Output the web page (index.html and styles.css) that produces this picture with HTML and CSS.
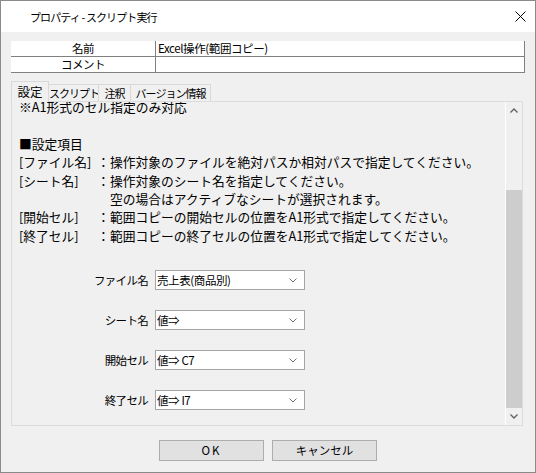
FILE: index.html
```html
<!DOCTYPE html>
<html lang="ja">
<head>
<meta charset="utf-8">
<title>プロパティ - スクリプト実行</title>
<link rel="stylesheet" href="styles.css">
</head>
<body>
<div class="window">
  <div class="titlebar">
    <span class="title">プロパティ - スクリプト実行</span>
    <span class="close">
      <svg width="11" height="11" viewBox="0 0 11 11"><path d="M0.5 0.5 L10.5 10.5 M10.5 0.5 L0.5 10.5" stroke="#000" stroke-width="1" fill="none"/></svg>
    </span>
  </div>
  <div class="body">
    <div class="props">
      <div class="prow"><div class="pkey">名前</div><div class="pval">Excel操作(範囲コピー)</div></div>
      <div class="prow"><div class="pkey">コメント</div><div class="pval"></div></div>
    </div>
    <div class="tabs">
      <div class="tab active w1">設定</div>
      <div class="tab w2">スクリプト</div>
      <div class="tab w3">注釈</div>
      <div class="tab w4">バージョン情報</div>
    </div>
    <div class="panel">
      <div class="viewport">
        <div class="content">
          <div class="desc">
            <div class="line first">※A1形式のセル指定のみ対応</div>
            <div class="line"></div>
            <div class="line">■設定項目</div>
            <div class="line"><span class="lbl">[ファイル名]</span><span class="colon">：</span><span>操作対象のファイルを絶対パスか相対パスで指定してください。</span></div>
            <div class="line"><span class="lbl">[シート名]</span><span class="colon">：</span><span>操作対象のシート名を指定してください。</span></div>
            <div class="line indent">空の場合はアクティブなシートが選択されます。</div>
            <div class="line"><span class="lbl">[開始セル]</span><span class="colon">：</span><span>範囲コピーの開始セルの位置をA1形式で指定してください。</span></div>
            <div class="line"><span class="lbl">[終了セル]</span><span class="colon">：</span><span>範囲コピーの終了セルの位置をA1形式で指定してください。</span></div>
          </div>
          <div class="form">
            <label class="flabel">ファイル名</label>
            <div class="combo"><span class="cval">売上表(商品別)</span><svg class="chev" width="8" height="5" viewBox="0 0 8 5"><path d="M0.5 0.5 L4 4 L7.5 0.5" stroke="#6d6d6d" fill="none"/></svg></div>
            <label class="flabel">シート名</label>
            <div class="combo"><span class="cval">値⇒</span><svg class="chev" width="8" height="5" viewBox="0 0 8 5"><path d="M0.5 0.5 L4 4 L7.5 0.5" stroke="#6d6d6d" fill="none"/></svg></div>
            <label class="flabel">開始セル</label>
            <div class="combo"><span class="cval">値⇒ C7</span><svg class="chev" width="8" height="5" viewBox="0 0 8 5"><path d="M0.5 0.5 L4 4 L7.5 0.5" stroke="#6d6d6d" fill="none"/></svg></div>
            <label class="flabel">終了セル</label>
            <div class="combo"><span class="cval">値⇒ I7</span><svg class="chev" width="8" height="5" viewBox="0 0 8 5"><path d="M0.5 0.5 L4 4 L7.5 0.5" stroke="#6d6d6d" fill="none"/></svg></div>
          </div>
        </div>
      </div>
      <div class="scrollbar">
        <div class="sb-btn up"><svg width="8" height="5" viewBox="0 0 8 5"><path d="M0.5 4.5 L4 1 L7.5 4.5" stroke="#606060" stroke-width="1.3" fill="none"/></svg></div>
        <div class="sb-gap"></div>
        <div class="sb-thumb"></div>
        <div class="sb-btn down"><svg width="8" height="5" viewBox="0 0 8 5"><path d="M0.5 0.5 L4 4 L7.5 0.5" stroke="#606060" stroke-width="1.3" fill="none"/></svg></div>
      </div>
    </div>
    <div class="buttons">
      <button class="btn ok">OK</button>
      <button class="btn">キャンセル</button>
    </div>
  </div>
</div>
</body>
</html>
```
FILE: styles.css
```css
* { box-sizing: border-box; }
html, body { margin: 0; padding: 0; background: #f0f0f0; }
body {
  font-family: "Noto Sans CJK JP", "Noto Sans", sans-serif;
  font-size: 12px;
  color: #000;
}
.window {
  width: 536px;
  height: 473px;
  border: 1px solid #8a8a8a;
  background: #f0f0f0;
  display: flex;
  flex-direction: column;
}
.titlebar {
  height: 31px;
  background: #fff;
  display: flex;
  align-items: center;
  justify-content: space-between;
  padding: 0 9px 0 29px;
}
.title {
  font-size: 11px;
  letter-spacing: -0.9px;
  line-height: 14px;
}
.close { display: flex; align-items: center; height: 11px; }
.body {
  flex: 1;
  padding: 9px 10px 0 10px;
  display: flex;
  flex-direction: column;
}
.props { background: #fff; border-right: 1px solid #808080; }
.prow { display: flex; border-bottom: 1px solid #808080; height: 16px; }
.pkey {
  width: 145px;
  border-right: 1px solid #808080;
  text-align: center;
  line-height: 15px;
  font-size: 11.5px;
  letter-spacing: -0.5px;
}
.pval {
  flex: 1;
  padding-left: 2px;
  line-height: 15px;
  font-size: 11.5px;
  letter-spacing: -0.4px;
}
.tabs {
  margin-top: 8px;
  height: 20px;
  display: flex;
  align-items: flex-end;
  position: relative;
  z-index: 1;
}
.tab {
  height: 17px;
  border: 1px solid #d9d9d9;
  border-bottom: none;
  margin-right: -1px;
  background: #f0f0f0;
  text-align: center;
  line-height: 16px;
  font-size: 11px;
  letter-spacing: -1px;
  white-space: nowrap;
}
.tab.active {
  height: 21px;
  margin-bottom: -1px;
  line-height: 20px;
  font-size: 12.5px;
  letter-spacing: 0;
  position: relative;
  z-index: 2;
}
.w1 { width: 38px; }
.w2 { width: 51px; }
.w3 { width: 33px; }
.w4 { width: 81px; }
.panel {
  width: 512px;
  height: 325px;
  border: 1px solid #dcdcdc;
  display: flex;
  background: #f0f0f0;
}
.viewport { flex: 1; overflow: hidden; }
.content { padding-left: 7px; }
.desc { font-size: 12.75px; }
.line { height: 18.4px; line-height: 18.4px; display: flex; white-space: nowrap; }
.line.first { height: 14.4px; line-height: 10.4px; overflow: hidden; }
.lbl { width: 78px; }
.colon { width: 13px; }
.indent { padding-left: 91px; }
.form {
  margin-top: 24.5px;
  display: grid;
  grid-template-columns: 129px 150px;
  column-gap: 7px;
  row-gap: 20px;
  align-items: center;
}
.flabel {
  text-align: right;
  font-size: 11.5px;
  letter-spacing: -0.7px;
  line-height: 20px;
}
.combo {
  height: 20px;
  background: #fff;
  border: 1px solid #a5a5a5;
  display: flex;
  align-items: center;
  justify-content: space-between;
  padding: 0 7px 0 1px;
}
.cval { font-size: 11.5px; letter-spacing: -0.4px; line-height: 18px; }
.chev { margin-top: 1px; }
.scrollbar {
  width: 17px;
  border-left: 1px solid #fff;
  display: flex;
  flex-direction: column;
  background: #f0f0f0;
}
.sb-btn { height: 16px; display: flex; align-items: center; justify-content: center; }
.sb-btn.down { height: 17px; }
.sb-gap { height: 72px; }
.sb-thumb { flex: 1; background: #cdcdcd; }
.buttons {
  margin-top: 14px;
  display: flex;
  justify-content: center;
  gap: 8px;
}
.btn {
  width: 105px;
  height: 21px;
  background: #e1e1e1;
  border: 1px solid #adadad;
  font-family: "Noto Sans CJK JP", "Noto Sans", sans-serif;
  font-size: 11.5px;
  padding: 0;
  line-height: 19px;
  color: #000;
}
.btn.ok { letter-spacing: 2px; }
```
